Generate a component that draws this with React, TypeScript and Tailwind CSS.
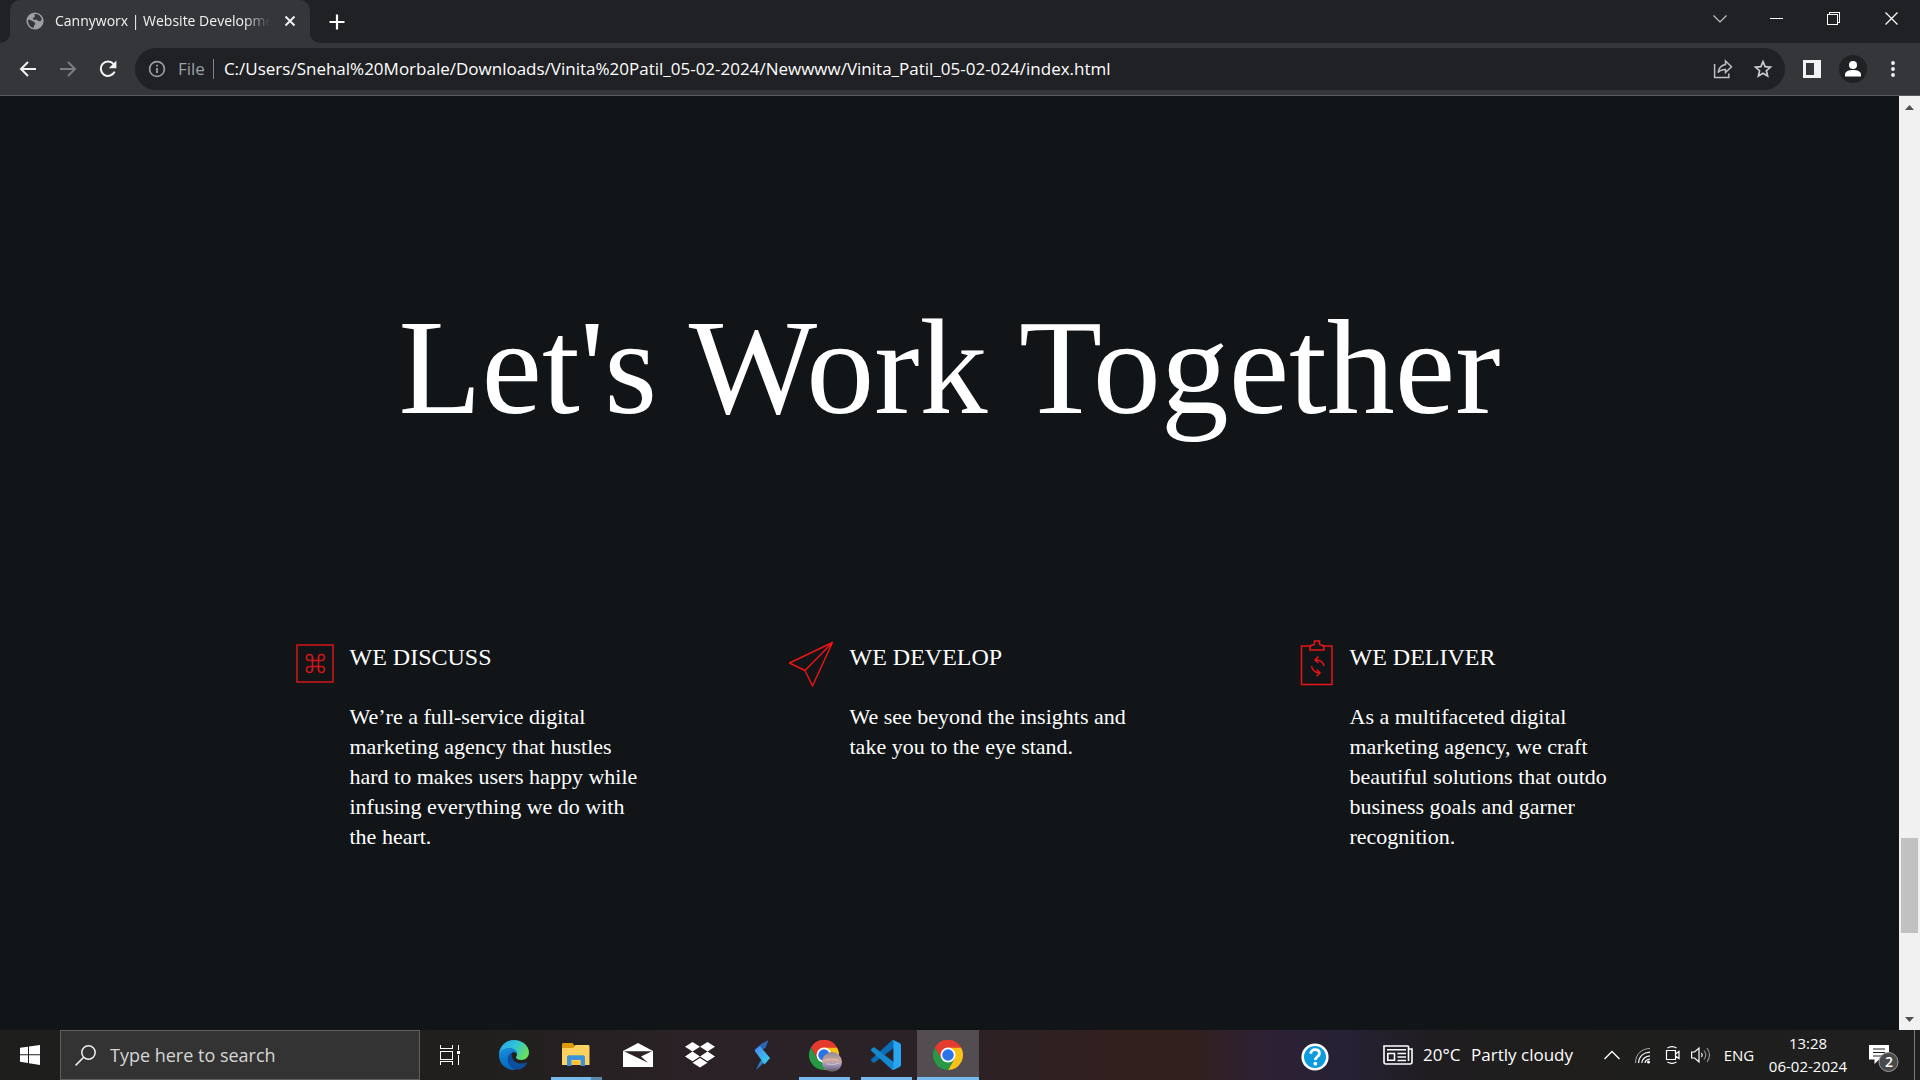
import React from "react";

const sans = "font-['Open_Sans','Noto_Sans',sans-serif]";
const serif = "font-['Liberation_Serif','Times_New_Roman',serif]";

/* ---------- Browser window ---------- */

function GlobeIcon() {
  return (
    <svg viewBox="0 0 18 18" className="size-[18px] shrink-0" aria-hidden="true">
      <circle cx="9" cy="9" r="8.6" fill="#9aa0a6" />
      <path
        d="M2 7.5 L5 8.2 L8.3 10 L9.5 12 L8 13.6 L7.8 16 C4 15.3 1.8 12 2 7.5Z M8.5 2.2 C11.5 1.5 14.5 3.6 15.8 7 L14.6 9.2 L12 9 L11 7.6 L8 8 L6.6 6 L8.8 5Z"
        fill="#35363a"
      />
    </svg>
  );
}

function BackIcon() {
  return (
    <svg viewBox="0 0 20 20" className="size-5" fill="none" stroke="#f1f3f4" strokeWidth="2" aria-hidden="true">
      <path d="M18 10H3.5M10 3 3 10l7 7" />
    </svg>
  );
}

function ForwardIcon() {
  return (
    <svg viewBox="0 0 20 20" className="size-5" fill="none" stroke="#7c7d80" strokeWidth="2" aria-hidden="true">
      <path d="M2 10h14.5M10 3l7 7-7 7" />
    </svg>
  );
}

function ReloadIcon() {
  return (
    <svg viewBox="0 0 20 20" className="size-5" aria-hidden="true">
      <path d="M16.6 12.6A7.2 7.2 0 1 1 15.6 5.2" fill="none" stroke="#f1f3f4" strokeWidth="2.1" />
      <path d="M18.4 1.6v7.6h-7.6z" fill="#f1f3f4" />
    </svg>
  );
}

function InfoIcon() {
  return (
    <svg viewBox="0 0 18 18" className="size-[18px] shrink-0" fill="none" stroke="#9aa0a6" aria-hidden="true">
      <circle cx="9" cy="9" r="7.4" strokeWidth="1.7" />
      <path d="M9 8v5M9 4.8v1.8" strokeWidth="1.8" />
    </svg>
  );
}

function ShareIcon() {
  return (
    <svg viewBox="0 0 20 20" className="size-5" fill="none" stroke="#bdc1c6" strokeWidth="1.5" aria-hidden="true">
      <path d="M1.6 5v13.400h14.200v-4" />
      <path d="M12.500 2l6 5.800-6 5.800v-3.200c-3.400 0-5.800.9-7.400 3.200.5-4.400 3.200-7.400 7.400-8.200z" />
    </svg>
  );
}

function StarIcon() {
  return (
    <svg viewBox="0 0 20 20" className="size-5" fill="none" stroke="#c9ccd0" strokeWidth="1.7" aria-hidden="true">
      <path d="M10 2.600l2.100 5 5.400.5-4.100 3.600 1.200 5.300L10 14.200l-4.600 2.800 1.200-5.300L2.500 8.100l5.400-.5z" />
    </svg>
  );
}

function Browser({ children }: { children: React.ReactNode }) {
  return (
    <div className="flex min-h-0 flex-1 flex-col bg-[#35363a]">
      <header>
        <div className="flex h-[43px] items-stretch bg-[#202124]">
          <div className="flex w-[10px] items-end">
            <div className="size-[10px] bg-[#35363a]">
              <div className="size-full rounded-br-[10px] bg-[#202124]" />
            </div>
          </div>
          <div className="flex w-[300px] items-center rounded-t-[10px] bg-[#35363a] pr-2 pb-px pl-4">
            <GlobeIcon />
            <div className="ml-[11px] w-[215px] text-[14px] leading-5 whitespace-nowrap text-[#f1f3f4] [mask-image:linear-gradient(to_right,black_88%,transparent)]">
              Cannyworx | Website Developme
            </div>
            <button aria-label="Close tab" className="ml-auto flex size-6 shrink-0 items-center justify-center">
              <svg viewBox="0 0 12 12" className="size-3" stroke="#f1f3f4" strokeWidth="1.900" aria-hidden="true">
                <path d="M1.500 1.500l9 9M10.500 1.500l-9 9" />
              </svg>
            </button>
          </div>
          <div className="flex w-[10px] items-end">
            <div className="size-[10px] bg-[#35363a]">
              <div className="size-full rounded-bl-[10px] bg-[#202124]" />
            </div>
          </div>
          <button aria-label="New tab" className="flex w-[34px] items-center justify-center">
            <svg viewBox="0 0 16 16" className="size-4" stroke="#fff" strokeWidth="2.200" aria-hidden="true">
              <path d="M8 .5v15M.5 8h15" />
            </svg>
          </button>
          <div className="flex-1" />
          <div className="flex h-[37px] text-white">
            <button aria-label="Search tabs" className="flex w-[57px] items-center justify-center">
              <svg viewBox="0 0 14 8" className="h-2 w-[14px]" fill="none" stroke="#c4c5c7" strokeWidth="1.200" aria-hidden="true">
                <path d="M.5.5L7 7 13.500.5" />
              </svg>
            </button>
            <button aria-label="Minimize" className="flex w-[57px] items-center justify-center">
              <span className="h-px w-[13px] bg-white" />
            </button>
            <button aria-label="Restore" className="flex w-[57px] items-center justify-center">
              <svg viewBox="0 0 13 13" className="size-[13px]" fill="none" stroke="#fff" shapeRendering="crispEdges" aria-hidden="true">
                <path d="M.5 2.500h10v10h-10zM2.500 2.500v-2h10v10h-2" />
              </svg>
            </button>
            <button aria-label="Close window" className="flex w-[58px] items-center justify-center">
              <svg viewBox="0 0 13 13" className="size-[13px]" stroke="#fff" strokeWidth="1.200" aria-hidden="true">
                <path d="M.5.5l12 12M12.500.5l-12 12" />
              </svg>
            </button>
          </div>
        </div>
        <div className="flex h-[53px] items-center border-b border-[#5a5b5f] pl-2">
          <button aria-label="Back" className="flex w-10 justify-center"><BackIcon /></button>
          <button aria-label="Forward" className="flex w-10 justify-center"><ForwardIcon /></button>
          <button aria-label="Reload" className="flex w-10 justify-center"><ReloadIcon /></button>
          <div className="ml-[7px] flex h-[42px] flex-1 items-center rounded-full bg-[#202124] pr-[2px] pl-[13px]">
            <InfoIcon />
            <label htmlFor="address" className="ml-3 text-[17px] text-[#9aa0a6]">File</label>
            <span className="ml-2 h-5 w-px bg-[#80868b]" />
            <input
              id="address"
              readOnly
              className="ml-[10px] min-w-0 flex-1 bg-transparent text-[17px] text-white outline-none"
              value="C:/Users/Snehal%20Morbale/Downloads/Vinita%20Patil_05-02-2024/Newwww/Vinita_Patil_05-02-024/index.html"
            />
            <button aria-label="Share" className="flex w-10 justify-center"><ShareIcon /></button>
            <button aria-label="Bookmark" className="flex w-10 justify-center"><StarIcon /></button>
          </div>
          <button aria-label="Side panel" className="ml-[7px] flex w-10 justify-center">
            <svg viewBox="0 0 20 20" className="size-5" aria-hidden="true">
              <path fillRule="evenodd" d="M1 1h18v18H1zM4 4v12h8V4z" fill="#f1f3f4" />
            </svg>
          </button>
          <button aria-label="Profile" className="flex w-[42px] justify-center">
            <svg viewBox="0 0 28 28" className="size-7" aria-hidden="true">
              <circle cx="14" cy="14" r="14" fill="#202124" />
              <circle cx="14" cy="10" r="4" fill="#fff" />
              <path d="M6 21.500v-2.200c0-2.900 4-4.300 8-4.300s8 1.400 8 4.300v2.200z" fill="#fff" />
            </svg>
          </button>
          <button aria-label="Menu" className="mr-2 flex w-[38px] justify-center">
            <svg viewBox="0 0 4 18" className="h-[18px] w-1" fill="#f1f3f4" aria-hidden="true">
              <circle cx="2" cy="3" r="1.900" />
              <circle cx="2" cy="9" r="1.900" />
              <circle cx="2" cy="15" r="1.900" />
            </svg>
          </button>
        </div>
      </header>
      <div className="flex min-h-0 flex-1">
        {children}
        <Scrollbar />
      </div>
    </div>
  );
}

function Scrollbar() {
  return (
    <div className="flex w-[21px] flex-col bg-[#f1f1f1]">
      <button aria-label="Scroll up" className="flex h-[22px] items-center justify-center">
        <svg viewBox="0 0 9 5" className="h-[5px] w-[9px]" fill="#505050" aria-hidden="true"><path d="M0 5L4.500 0 9 5z" /></svg>
      </button>
      <div className="flex min-h-0 flex-1 flex-col px-[2px]">
        <div className="grow-[720]" />
        <div className="h-[95px] bg-[#c1c1c1]" />
        <div className="grow-[75]" />
      </div>
      <button aria-label="Scroll down" className="flex h-[22px] items-center justify-center">
        <svg viewBox="0 0 9 5" className="h-[5px] w-[9px]" fill="#505050" aria-hidden="true"><path d="M0 0h9L4.500 5z" /></svg>
      </button>
    </div>
  );
}

/* ---------- Page ---------- */

function CommandIcon() {
  return (
    <svg viewBox="0 0 52 52" className="size-[52px] shrink-0" fill="none" stroke="#d31616" strokeWidth="1.500" aria-hidden="true">
      <path d="M12 9h36v37H12z" />
      <path d="M27.500 21v13M33.500 21v13M24.500 24.500h12M24.500 30.500h12" />
      <path d="M27.500 24.500v-3a3 3 0 1 0-3 3M33.500 24.500v-3a3 3 0 1 1 3 3M27.500 30.500v3a3 3 0 1 1-3-3M33.500 30.500v3a3 3 0 1 0 3-3" />
    </svg>
  );
}

function PlaneIcon() {
  return (
    <svg viewBox="0 0 52 52" className="size-[52px] shrink-0" fill="none" stroke="#f01414" strokeWidth="1.400" strokeLinejoin="round" aria-hidden="true">
      <path d="M47.500 6.500L4.500 27l15.500 7.500L27.500 50zL20 34.500" />
    </svg>
  );
}

function ClipboardIcon() {
  return (
    <svg viewBox="0 0 52 52" className="size-[52px] shrink-0" fill="none" stroke="#e81616" strokeWidth="1.500" aria-hidden="true">
      <path d="M26 10h-9.500v38.500H47V10h-9.500" />
      <path d="M25 14v-2.500c0-1.500 1-2.500 3-2.500 1 0 1.500-.5 1.500-1.500V5h5v2.500c0 1 .5 1.500 1.500 1.500 2 0 3 1 3 2.500V14z" />
      <path d="M30.500 24c4.500-.5 8 2 8.500 6M33.500 20.500L30 24l3.500 3M26.500 30c.5 4 4 7 8.500 7M31.800 33.500l3.200 3.500-3.500 3" />
    </svg>
  );
}

const steps = [
  {
    title: "WE DISCUSS",
    icon: <CommandIcon />,
    text: "We’re a full-service digital marketing agency that hustles hard to makes users happy while infusing everything we do with the heart.",
  },
  {
    title: "WE DEVELOP",
    icon: <PlaneIcon />,
    text: "We see beyond the insights and take you to the eye stand.",
  },
  {
    title: "WE DELIVER",
    icon: <ClipboardIcon />,
    text: "As a multifaceted digital marketing agency, we craft beautiful solutions that outdo business goals and garner recognition.",
  },
];

function Page() {
  return (
    <main className={`${serif} flex-1 overflow-hidden bg-[#111518] pt-[191px] text-white`}>
      <h1 className="text-center text-[136px] leading-[160px]">Let's Work Together</h1>
      <div className="mx-auto mt-[189px] grid max-w-[1500px] grid-cols-3">
        {steps.map((step) => (
          <section key={step.title} className="flex items-start gap-[13px] pl-[85px]">
            {step.icon}
            <div className="w-[300px] pt-[6px]">
              <h2 className="text-[24px] leading-[30px]">{step.title}</h2>
              <p className="mt-[30px] text-[22px] leading-[30px]">{step.text}</p>
            </div>
          </section>
        ))}
      </div>
    </main>
  );
}

/* ---------- Taskbar ---------- */

function ChromeLogo() {
  return (
    <svg viewBox="0 0 48 48" className="size-[30px]" aria-hidden="true">
      <path d="M24 24L3.200 12A24 24 0 0 1 44.800 12z" fill="#e33b2e" />
      <path d="M44.800 12A24 24 0 0 1 24 48L34.400 30 24 12z" fill="#fbc116" />
      <path d="M24 48A24 24 0 0 1 3.200 12L13.600 30l20.800 0z" fill="#269846" />
      <path d="M3.200 12A24 24 0 0 1 44.800 12H24L13.600 30z" fill="#e33b2e" />
      <circle cx="24" cy="24" r="12" fill="#fff" />
      <circle cx="24" cy="24" r="9.300" fill="#2a74e8" />
    </svg>
  );
}

function EdgeLogo() {
  return (
    <svg viewBox="0 0 30 30" className="size-[30px]" aria-hidden="true">
      <defs>
        <linearGradient id="edge-top" x1="0" y1="0.200" x2="1" y2="0.600">
          <stop offset="0" stopColor="#2aa5e8" />
          <stop offset="0.500" stopColor="#30c4d8" />
          <stop offset="1" stopColor="#6be051" />
        </linearGradient>
        <linearGradient id="edge-body" x1="0" y1="0" x2="0.300" y2="1">
          <stop offset="0" stopColor="#1a91de" />
          <stop offset="1" stopColor="#0668c0" />
        </linearGradient>
      </defs>
      <path d="M0 15C0 6.500 6.500 0 15 0s15 6 15 12.500c0 4.500-3.500 7.500-7.500 7.500-3.500 0-5.500-1.500-5.500-2.500s1-1.200 1-3.500c0-3-3-5.500-7-5.500C6 8.500 1.500 11 0 15z" fill="url(#edge-top)" />
      <path d="M0 15C.5 11 5 8 10.500 8c4.500 0 7.500 3 7.500 6-1-1.500-3-2-4.500-1.500C10 14 8.500 17 9 20.500c.6 4.500 4.500 8 8.500 9.300C8 31 0 24.500 0 15z" fill="url(#edge-body)" />
      <path d="M13 12.800C9.500 14 8.200 17.500 9 21c1.100 4.800 5.500 8.500 9.500 8.500 4 0 7.500-2.800 9.500-6.300.3-.7-.3-1-.8-.7-5 2.500-11.700.5-13.700-4-.9-2-.9-4 -.5-5.700z" fill="#0c4f9e" />
    </svg>
  );
}

function FolderLogo() {
  return (
    <svg viewBox="0 0 28 24" className="h-6 w-7" aria-hidden="true">
      <path d="M0 1.500C0 .7.600 0 1.500 0h9l2 2.500V6H0z" fill="#dc9a05" />
      <path d="M0 5h11l2.500-3H26c1 0 1.500.600 1.500 1.500V22H0z" fill="#ffd260" />
      <path d="M5 23V14.500c0-1.400.8-2.200 2-2.200h14c1.200 0 2 .8 2 2.200V23h-4.500v-6h-9v6z" fill="#3a93d8" />
      <path d="M10 18h8.500v4H10z" fill="#fbc234" />
    </svg>
  );
}

function MailLogo() {
  return (
    <svg viewBox="0 0 30 24" className="h-6 w-[30px]" aria-hidden="true">
      <path d="M0 8L15 0l15 8v16H0z" fill="#fff" />
      <path d="M1 8.300h28L18 13.500l7 6.300z" fill="#2a2226" />
    </svg>
  );
}

function DropboxLogo() {
  return (
    <svg viewBox="0 0 30 26" className="h-[26px] w-[30px]" fill="#fff" aria-hidden="true">
      <path d="M7.500 0L15 4.800 7.500 9.600 0 4.800zM22.500 0L30 4.800l-7.500 4.800L15 4.800zM0 14.400l7.500-4.800 7.500 4.800-7.500 4.800zM22.500 9.600L30 14.400l-7.500 4.800-7.500-4.800zM7.500 20.800L15 16l7.500 4.800-7.500 4.800z" />
    </svg>
  );
}

function SLogo() {
  return (
    <svg viewBox="0 0 16 30" className="h-[30px] w-4" aria-hidden="true">
      <defs>
        <linearGradient id="s-band" x1="0" y1="0" x2="1" y2="1">
          <stop offset="0" stopColor="#4a86f0" />
          <stop offset="1" stopColor="#35d6f0" />
        </linearGradient>
      </defs>
      <path d="M14.500 0L8 3.500 1 9v2l6-1 4.500-2z" fill="#2c66b8" />
      <path d="M16 18l-6 0-4 3.500L2 30l6.500-6z" fill="#2f7cc8" />
      <path d="M.5 10.500L6 6l10 12-5.500 6.500z" fill="url(#s-band)" />
    </svg>
  );
}

function VsCodeLogo() {
  return (
    <svg viewBox="0 0 100 100" className="size-[30px]" aria-hidden="true">
      <path d="M96 11L75.500 1a6 6 0 0 0-7 1.200L1.300 63.600a4 4 0 0 0 0 6l5.500 5a4 4 0 0 0 5.300.2L93.400 13.400c2.700-2 6.600-.1 6.600 3.300v-.2A6 6 0 0 0 96 11z" fill="#0b6cb4" />
      <path d="M96 89L75.500 99a6 6 0 0 1-7-1.200L1.300 36.400a4 4 0 0 1 0-6l5.500-5a4 4 0 0 1 5.300-.2l81.300 61.400c2.700 2 6.600.1 6.600-3.300v.2A6 6 0 0 1 96 89z" fill="#1588d0" />
      <path d="M75.500 99a6 6 0 0 1-7-1.200c2.300 2.300 6.300.7 6.300-2.600V4.800c0-3.300-4-4.900-6.300-2.600a6 6 0 0 1 7-1.200l20.600 10A6 6 0 0 1 100 16.500v67a6 6 0 0 1-3.900 5.500z" fill="#29a5f2" />
    </svg>
  );
}

type AppState = "idle" | "open" | "grouped" | "active";

function TaskButton({ label, state = "idle", children }: { label: string; state?: AppState; children: React.ReactNode }) {
  return (
    <button
      aria-label={label}
      className={`flex w-[62px] flex-col items-center ${state === "active" ? "bg-[#534c50]" : ""}`}
    >
      <span className="flex h-[47px] items-center pt-[3px]">{children}</span>
      {state === "open" && <span className="h-[3px] w-[51px] bg-[#76b9ed]" />}
      {state === "grouped" && (
        <span className="flex h-[3px] w-[51px] bg-[#5a87ab]">
          <span className="w-10 bg-[#76b9ed]" />
        </span>
      )}
      {state === "active" && <span className="h-[3px] w-full bg-[#76b9ed]" />}
    </button>
  );
}

function Taskbar() {
  return (
    <footer className="flex h-[50px] items-stretch bg-linear-[to_right,#1e1e1d_0%,#211f1e_25%,#2a2226_36%,#2b2228_48%,#2e2123_53%,#32201f_58%,#32201f_62%,#2d2134_66%,#262134_70%,#1f1d20_75%,#1f1e1d_80%,#1f1f1f_100%] text-white">
      <button aria-label="Start" className="flex w-[60px] items-center justify-center">
        <svg viewBox="0 0 20 20" className="size-5" fill="#fff" aria-hidden="true">
          <path d="M0 2.800L8 1.700v7.600H0zM9 1.500L20 0v9.300H9zM0 10.200h8v7.700l-8-1.100zM9 10.200h11V20L9 18.300z" />
        </svg>
      </button>
      <label className="flex w-[360px] items-center gap-[14px] border border-[#5f5f5f] bg-[#333333] pl-[14px]">
        <svg viewBox="0 0 21 21" className="size-[21px] shrink-0" fill="none" stroke="#f0f0f0" strokeWidth="1.500" aria-hidden="true">
          <circle cx="13.500" cy="7.500" r="6.700" />
          <path d="M8.700 12.300L.6 20.400" />
        </svg>
        <input
          aria-label="Search"
          placeholder="Type here to search"
          className="min-w-0 flex-1 bg-transparent text-[18px] text-white outline-none placeholder:text-[#d6d6d6]"
        />
      </label>
      <button aria-label="Task view" className="mr-[3px] flex w-[60px] items-center justify-center">
        <svg viewBox="0 0 20 20" className="size-5" fill="none" stroke="#fff" shapeRendering="crispEdges" aria-hidden="true">
          <path d="M.5 0v3.500h12V0M.5 20v-3.500h12V20M.5 6.500h12v8H.5zM18.500 0v5M18.500 10v10" />
          <path d="M17 6h3v3h-3z" fill="#fff" stroke="none" />
        </svg>
      </button>
      <TaskButton label="Edge"><EdgeLogo /></TaskButton>
      <TaskButton label="File Explorer" state="grouped"><FolderLogo /></TaskButton>
      <TaskButton label="Mail"><MailLogo /></TaskButton>
      <TaskButton label="Dropbox"><DropboxLogo /></TaskButton>
      <TaskButton label="Shortcuts"><SLogo /></TaskButton>
      <TaskButton label="Chrome profile" state="open">
        <span className="relative">
          <ChromeLogo />
          <svg viewBox="0 0 20 20" className="absolute -right-[3px] -bottom-[2px] size-5" aria-hidden="true">
            <defs>
              <linearGradient id="avatar-sky" x1="0" y1="0" x2="0" y2="1">
                <stop offset="0" stopColor="#8d8a9c" />
                <stop offset="0.450" stopColor="#d0a79a" />
                <stop offset="0.600" stopColor="#a99cc0" />
                <stop offset="0.850" stopColor="#77718f" />
                <stop offset="1" stopColor="#4f5136" />
              </linearGradient>
            </defs>
            <circle cx="10" cy="10" r="10" fill="url(#avatar-sky)" />
            <path d="M3 8q6-2 13 0M5 12q6 2 12-1" fill="none" stroke="#e6cfc4" opacity=".7" />
          </svg>
        </span>
      </TaskButton>
      <TaskButton label="Visual Studio Code" state="open"><VsCodeLogo /></TaskButton>
      <TaskButton label="Chrome" state="active"><ChromeLogo /></TaskButton>

      <div className="flex-1" />

      <div className="flex items-center text-[17px] whitespace-nowrap">
        <button aria-label="Help" className="mt-1 mr-[54px]">
          <svg viewBox="0 0 28 28" className="size-7" aria-hidden="true">
            <circle cx="14" cy="14" r="13.600" fill="#fff" />
            <circle cx="14" cy="14" r="11" fill="#0e9ade" />
            <path d="M9.800 10.800c0-2.600 1.800-4.100 4.300-4.100 2.600 0 4.300 1.500 4.300 3.700 0 3-4 3.200-4 6.600" fill="none" stroke="#fff" strokeWidth="2.800" />
            <circle cx="14.300" cy="20.700" r="1.900" fill="#fff" />
          </svg>
        </button>
        <button className="flex items-center gap-[10px]">
          <svg viewBox="0 0 30 20" className="h-5 w-[30px]" fill="none" stroke="#fff" strokeWidth="1.600" aria-hidden="true">
            <path d="M25.500 1H1v16c0 1.300.8 2 2 2h24c1.200 0 2-.7 2-2V4h-3.500" />
            <path d="M25.500 1v15M4 4.800h19M14.500 8.500H23M14.500 12H23M14.500 15.500H23M4.800 8.500h6.700v6.700H4.800z" />
          </svg>
          <span className="flex w-[150px] justify-between"><span>20°C</span><span>Partly cloudy</span></span>
        </button>
        <button aria-label="Show hidden icons" className="ml-[31px]">
          <svg viewBox="0 0 16 10" className="h-[10px] w-4" fill="none" stroke="#fff" strokeWidth="1.300" aria-hidden="true">
            <path d="M.5 9L8 1.500 15.500 9" />
          </svg>
        </button>
        <button aria-label="Network" className="ml-[14px]">
          <svg viewBox="0 0 17 17" className="size-[17px]" fill="none" stroke="#fff" aria-hidden="true">
            <path d="M1.500 16C1.500 7 8 1.500 16 1.500" opacity=".6" />
            <path d="M4.500 16C5 9.500 9.500 5.500 16 5.200M7.800 16c.3-4 3.700-7 8.200-7.200M11 16c.3-2 2.200-3.600 5-3.800" strokeWidth="1.200" />
            <circle cx="14.500" cy="15" r="1.500" fill="#fff" stroke="none" />
          </svg>
        </button>
        <button aria-label="Camera" className="ml-[14px]">
          <svg viewBox="0 0 16 18" className="h-[18px] w-4" fill="none" stroke="#fff" strokeWidth="1.200" aria-hidden="true">
            <path d="M1.500 4.500h9v9h-9zM10.500 8l3.500-2.500v7L10.500 10M2.500 2Q7-.8 11.500 2M2.500 16q4.500 2.800 9 0" />
          </svg>
        </button>
        <button aria-label="Volume" className="ml-[10px]">
          <svg viewBox="0 0 20 18" className="h-[18px] w-5" fill="none" stroke="#fff" strokeWidth="1.200" aria-hidden="true">
            <path d="M.6 6h3L8 2v14l-4.400-4H.6zM10.500 7q1.500 2 0 4" />
            <path d="M13 4.500q3.500 4.500 0 9M16 2q5 7 0 14" opacity=".5" />
          </svg>
        </button>
        <button className="ml-3 w-[32px] text-[15px]">ENG</button>
        <button className="ml-[13px] w-[80px] text-center text-[15px] leading-[23px]">
          <span className="block">13:28</span>
          <span className="block">06-02-2024</span>
        </button>
        <button aria-label="Notifications, 2 new" className="relative ml-[18px] size-[34px]">
          <svg viewBox="0 0 34 34" className="size-[34px]" aria-hidden="true">
            <path d="M3 7h20v14.500H13L8.500 26v-4.500H3z" fill="#fff" />
            <path d="M7 11h12M7 14.500h12M7 18h9" stroke="#222" />
            <circle cx="22.500" cy="24" r="9.500" fill="#4a4a4a" stroke="#9a9a9a" />
          </svg>
          <span className="absolute right-[7px] bottom-0 text-[14px] leading-5 font-semibold">2</span>
        </button>
        <span className="ml-[14px] h-[50px] w-[6px] border-l border-[#7a7a7a]" />
      </div>
    </footer>
  );
}

export default function App() {
  return (
    <div className={`${sans} flex h-screen flex-col overflow-hidden`}>
      <Browser>
        <Page />
      </Browser>
      <Taskbar />
    </div>
  );
}
